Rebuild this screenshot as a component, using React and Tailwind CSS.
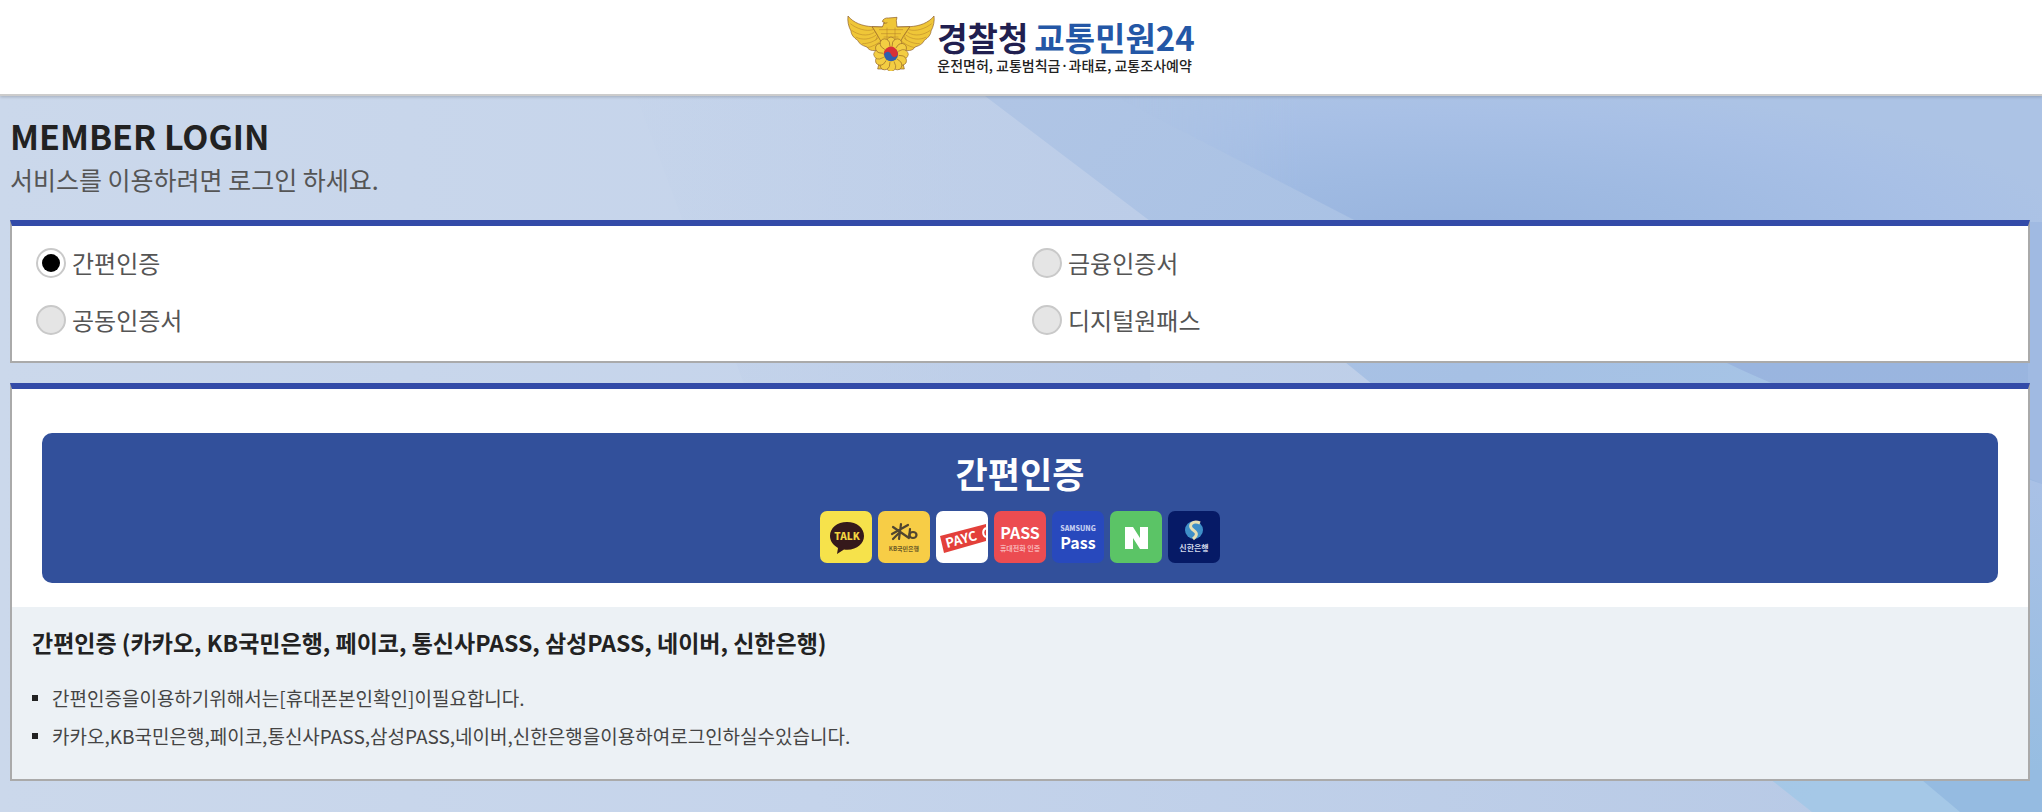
import React, { useState } from "react";

const METHODS = [
  { id: "simple", label: "간편인증" },
  { id: "finance", label: "금융인증서" },
  { id: "joint", label: "공동인증서" },
  { id: "onepass", label: "디지털원패스" },
];

const NOTES = [
  "간편인증을이용하기위해서는[휴대폰본인확인]이필요합니다.",
  "카카오,KB국민은행,페이코,통신사PASS,삼성PASS,네이버,신한은행을이용하여로그인하실수있습니다.",
];

const PETALS = [0, 30, 60, 90, 120, 150, 180, 210, 240, 270, 300, 330];

function Backdrop() {
  return (
    <svg
      className="absolute inset-0 -z-10 h-full w-full"
      viewBox="0 0 2042 812"
      preserveAspectRatio="none"
      aria-hidden="true"
    >
      <defs>
        <linearGradient id="sky" x1="0" y1="0" x2="1" y2="0">
          <stop offset="0" stopColor="#cbd8eb" />
          <stop offset="0.4" stopColor="#c5d4eb" />
          <stop offset="0.9" stopColor="#b8cae6" />
        </linearGradient>
        <linearGradient id="haze" gradientUnits="userSpaceOnUse" x1="600" y1="0" x2="1150" y2="0">
          <stop offset="0" stopColor="#bccde8" stopOpacity="0" />
          <stop offset="1" stopColor="#bccde8" />
        </linearGradient>
        <linearGradient id="band" gradientUnits="userSpaceOnUse" x1="1000" y1="96" x2="1800" y2="812">
          <stop offset="0" stopColor="#b0c5e5" />
          <stop offset="0.5" stopColor="#a6c0e4" />
          <stop offset="1" stopColor="#a5c8e7" />
        </linearGradient>
        <radialGradient id="deep" gradientUnits="userSpaceOnUse" cx="0" cy="0" r="1" gradientTransform="translate(1450 235) scale(620 150)">
          <stop offset="0" stopColor="#98b4de" />
          <stop offset="0.4" stopColor="#9fbae2" />
          <stop offset="0.8" stopColor="#a8c0e6" />
          <stop offset="1" stopColor="#acc3e5" />
        </radialGradient>
        <linearGradient id="fade" gradientUnits="userSpaceOnUse" x1="1120" y1="0" x2="1300" y2="0">
          <stop offset="0" stopColor="#ffffff" stopOpacity="0" />
          <stop offset="1" stopColor="#ffffff" />
        </linearGradient>
        <mask id="soft">
          <rect x="1080" y="90" width="962" height="140" fill="url(#fade)" />
        </mask>
        <linearGradient id="edge" gradientUnits="userSpaceOnUse" x1="0" y1="362" x2="0" y2="812">
          <stop offset="0" stopColor="#9ab5df" />
          <stop offset="1" stopColor="#95bbe1" />
        </linearGradient>
        <linearGradient id="right" gradientUnits="userSpaceOnUse" x1="0" y1="480" x2="0" y2="780">
          <stop offset="0" stopColor="#a9c1e6" />
          <stop offset="1" stopColor="#96bde1" />
        </linearGradient>
      </defs>
      <rect width="2042" height="812" fill="url(#sky)" />
      <path d="M600 0H1150V400H750z" fill="url(#haze)" />
      <path d="M985 96L1150 221L1345 362L1372 384L1770 779L1812 812H2042V96z" fill="url(#band)" />
      <path d="M1080 78L1358 222H2042V96V78z" fill="url(#deep)" mask="url(#soft)" />
      <path d="M1725 362Q1780 390 2042 490V362z" fill="url(#edge)" />
      <path d="M2028 222H2042V484L2028 478z" fill="#a0bae2" />
      <path d="M2028 479L2042 484V790H2028z" fill="url(#right)" />
      <path d="M1910 770L1960 812H2042V770z" fill="#95bbe1" />
    </svg>
  );
}

function Emblem() {
  return (
    <svg className="h-[56px] w-[88px]" viewBox="30 22 264 168" aria-hidden="true">
      <g fill="#efc638" stroke="#8a5a2b" strokeWidth="2" strokeLinejoin="round">
        <path d="M33 25C50 46 76 55 105 57L146 58L160 104L128 124C114 132 96 130 90 118C76 114 66 108 62 98C50 90 42 80 42 70C34 56 31 40 33 25z" />
        <path d="M291 25C274 46 248 55 219 57L178 58L164 104L196 124C210 132 228 130 234 118C248 114 258 108 262 98C274 90 282 80 282 70C290 56 293 40 291 25z" />
        <path d="M105 57L136 58L142 44L136 42C137 34 146 30 154 31L180 29L178 39L180 58L219 57L200 84L185 112H138L122 84z" />
        <path d="M138 46C142 47 147 47 151 45" fill="none" />
      </g>
      <g fill="none" stroke="#b07c28" strokeWidth="1.500">
        <path d="M40 48C60 64 88 72 108 66M44 68C64 82 90 88 112 74M56 88C76 98 98 96 118 82M76 108C94 108 112 102 124 90M90 120C106 118 122 108 134 98" />
        <path d="M284 48C264 64 236 72 216 66M280 68C260 82 234 88 212 74M268 88C248 98 226 96 206 82M248 108C230 108 212 102 200 90M234 120C218 118 202 108 190 98" />
        <path d="M108 60L122 84L116 98M216 60L202 84L208 98M126 66H198M132 78H192M140 88H184M150 60V98M174 60V98" />
      </g>
      <path d="M130 150L122 184H142L149 176L155 186H168L174 176L182 184H202L194 150z" fill="#efc638" stroke="#8a5a2b" strokeWidth="2" />
      <g fill="#f3cd42" stroke="#9a6b2a" strokeWidth="2">
        {PETALS.map((angle) => (
          <path
            key={angle}
            d="M162 140L148 106Q147 91 162 88Q177 91 176 106z"
            transform={`rotate(${angle} 162 140)`}
          />
        ))}
      </g>
      <circle cx="162" cy="140" r="24" fill="#efc638" />
      <circle cx="162" cy="140" r="21" fill="#2f5fae" />
      <path d="M142 146A21 21 0 1 1 182 134A10 10 0 0 1 162 140A10 10 0 0 0 142 146z" fill="#d83137" />
    </svg>
  );
}

function Tile({ color, children }) {
  return (
    <svg className="size-[52px]" viewBox="0 0 52 52" aria-hidden="true">
      <rect width="52" height="52" rx="7" fill={color} />
      {children}
    </svg>
  );
}

function ProviderTiles() {
  return (
    <span className="flex justify-center gap-[6px]">
      <Tile color="#f6e24b">
        <path d="M27 11C17 11 10 17 10 25C10 30 13 34 18 37L17 43L24 38.500C36 40 44 33 44 25C44 17 37 11 27 11z" fill="#35191b" />
        <text x="27" y="29" textAnchor="middle" fontSize="10" fontWeight="900" fill="#f3d541">TALK</text>
      </Tile>
      <Tile color="#f7cd46">
        <g fill="none" stroke="#50452f" strokeWidth="2.200" strokeLinecap="round">
          <path d="M23 13L21 28M15 16L31 27M14 23L30 14M22 21L15 28M32 18L31 27" />
          <ellipse cx="35" cy="24" rx="3.500" ry="3" />
        </g>
        <text x="26" y="40" textAnchor="middle" fontSize="6" fontWeight="700" fill="#6b5927">KB국민은행</text>
      </Tile>
      <Tile color="#ffffff">
        <path d="M4 25L50 13V30L8 42z" fill="#e3403a" />
        <text x="11" y="37" fontSize="13" fontWeight="700" fill="#ffffff" transform="rotate(-15 11 37)">PAYC</text>
        <path d="M50 17A5 5 0 0 0 50 26" fill="none" stroke="#ffffff" strokeWidth="2" />
      </Tile>
      <Tile color="#ec4c51">
        <text x="26" y="28" textAnchor="middle" fontSize="16" fontWeight="700" fill="#ffffff">PASS</text>
        <text x="26" y="40" textAnchor="middle" fontSize="7" fontWeight="700" fill="#f8b4b6">휴대전화 인증</text>
      </Tile>
      <Tile color="#2849bd">
        <text x="26" y="20" textAnchor="middle" fontSize="7" fontWeight="900" fill="#c3cdf1">SAMSUNG</text>
        <text x="26" y="38" textAnchor="middle" fontSize="16" fontWeight="700" fill="#ffffff">Pass</text>
      </Tile>
      <Tile color="#5bc466">
        <path d="M15 16H23L30 27V16H38V38H30L23 27V38H15z" fill="#ffffff" />
      </Tile>
      <Tile color="#061a66">
        <circle cx="26" cy="19" r="9" fill="#3f8fc8" />
        <path d="M32 12C25 9 20 14 24 18C28 21 31 23 25 28" fill="none" stroke="#e6dfb4" strokeWidth="3" />
        <text x="26" y="40" textAnchor="middle" fontSize="8" fontWeight="700" fill="#d5dbec">신한은행</text>
      </Tile>
    </span>
  );
}

export default function App() {
  const [method, setMethod] = useState("simple");

  return (
    <div className="relative isolate min-h-screen font-['Noto_Sans_CJK_KR',sans-serif]">
      <Backdrop />

      <header className="flex h-24 justify-center border-b-2 border-[#cccccc] bg-white pt-[15px] shadow-[0_1px_3px_rgba(0,0,0,0.2)]">
        <a href="/" className="flex items-start gap-[2px]">
          <Emblem />
          <span className="flex flex-col">
            <span className="flex gap-[6px] pt-1 text-[33px] leading-[36px] font-bold">
              <span className="text-[#211f50]">경찰청</span>
              <span className="text-[#2457a6]">교통민원24</span>
            </span>
            <span className="text-[14px] leading-[20px] font-medium text-[#222222]">
              운전면허, 교통범칙금·과태료, 교통조사예약
            </span>
          </span>
        </a>
      </header>

      <main className="pt-5 pr-3 pl-[10px]">
        <h1 className="text-[34px] leading-[40px] font-bold text-[#222222]">MEMBER LOGIN</h1>
        <p className="pt-1 text-[25px] leading-[38px] text-[#555555]">서비스를 이용하려면 로그인 하세요.</p>

        <fieldset
          aria-label="로그인 방법"
          className="mt-[22px] border-2 border-t-[6px] border-[#aaaaaa] border-t-[#334ba8] bg-white"
        >
          <div className="grid grid-cols-2 gap-y-[19px] pt-[18px] pb-[22px] pl-6">
            {METHODS.map(({ id, label }) => (
              <label key={id} className="flex items-center gap-[6px] text-[24px] leading-[38px] text-[#555555]">
                <input
                  type="radio"
                  name="method"
                  value={id}
                  checked={method === id}
                  onChange={() => setMethod(id)}
                  className="grid size-[30px] appearance-none place-items-center rounded-full border-2 border-[#c9c9c9] bg-[#e5e5e5] checked:bg-white checked:before:size-[18px] checked:before:rounded-full checked:before:bg-black"
                />
                {label}
              </label>
            ))}
          </div>
        </fieldset>

        <section className="mt-5 border-2 border-t-[6px] border-[#aaaaaa] border-t-[#334ba8] bg-white">
          <div className="px-[30px] pt-11 pb-6">
            <button type="button" className="block w-full rounded-[10px] bg-[#32509b] pt-[14px] pb-5">
              <span className="block pb-3 text-[35px] leading-[52px] font-bold text-white">간편인증</span>
              <ProviderTiles />
            </button>
          </div>
          <div className="bg-[#ecf1f5] px-5 pt-4 pb-6">
            <h2 className="text-[23px] leading-[38px] font-bold text-[#222222]">
              간편인증 (카카오, KB국민은행, 페이코, 통신사PASS, 삼성PASS, 네이버, 신한은행)
            </h2>
            <ul className="pt-[18px] text-[19px] leading-[38px] text-[#444444]">
              {NOTES.map((note) => (
                <li key={note} className="flex items-center gap-[14px]">
                  <span className="size-[6px] bg-[#222222]" />
                  {note}
                </li>
              ))}
            </ul>
          </div>
        </section>
      </main>
    </div>
  );
}
